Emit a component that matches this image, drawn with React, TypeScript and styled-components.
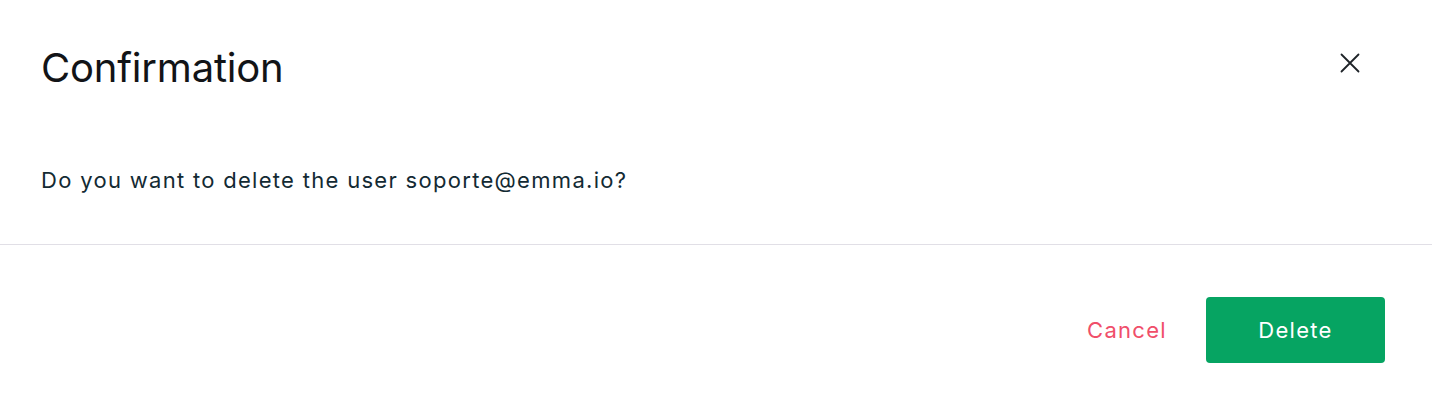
import React from "react";
import styled, { createGlobalStyle } from "styled-components";

const Global = createGlobalStyle`
  html, body { margin: 0; padding: 0; background: #ffffff; }
  body { font-family: Inter, "Noto Sans", sans-serif; }
`;

const Dialog = styled.div`
  width: 1432px;
  height: 412px;
  background: #fff;
  display: flex;
  flex-direction: column;
`;

const Header = styled.div`
  display: flex;
  align-items: flex-start;
  justify-content: space-between;
  padding: 44px 70px 0 41px;
  height: 48px;
`;

const Title = styled.h2`
  margin: 0;
  font-size: 40px;
  line-height: 48px;
  font-weight: 400;
  color: #121417;
  letter-spacing: -0.2px;
`;

const CloseButton = styled.button`
  border: 0;
  background: transparent;
  padding: 0;
  margin-top: 7px;
  width: 24px;
  height: 24px;
  display: flex;
  align-items: center;
  justify-content: center;
  cursor: pointer;
  color: #1e2328;
`;

const Body = styled.div`
  padding: 76px 41px 52px;
`;

const Message = styled.p`
  margin: 0;
  font-size: 22px;
  line-height: 24px;
  letter-spacing: 1.3px;
  color: #132a33;
`;

const Divider = styled.hr`
  margin: 0;
  border: 0;
  border-top: 1px solid #e1dfe6;
`;

const Footer = styled.div`
  display: flex;
  justify-content: flex-end;
  align-items: center;
  gap: 40px;
  padding: 52px 47px 0 0;
`;

const TextButton = styled.button`
  border: 0;
  background: transparent;
  font-family: inherit;
  font-size: 22px;
  letter-spacing: 1.3px;
  color: #f04e6a;
  padding: 0;
  margin-right: -1px;
  cursor: pointer;
`;

const PrimaryButton = styled.button`
  border: 0;
  background: #06a462;
  color: #fff;
  font-family: inherit;
  font-size: 22px;
  letter-spacing: 1.3px;
  width: 179px;
  height: 66px;
  border-radius: 4px;
  cursor: pointer;
`;

export default function App() {
  return (
    <>
      <Global />
      <Dialog>
        <Header>
          <Title>Confirmation</Title>
          <CloseButton aria-label="Close">
            <svg width="20" height="20" viewBox="0 0 20 20" fill="none">
              <path d="M1.5 1.5L18.5 18.5M18.5 1.5L1.5 18.5" stroke="currentColor" strokeWidth="1.8" strokeLinecap="round" />
            </svg>
          </CloseButton>
        </Header>
        <Body>
          <Message>Do you want to delete the user soporte@emma.io?</Message>
        </Body>
        <Divider />
        <Footer>
          <TextButton>Cancel</TextButton>
          <PrimaryButton>Delete</PrimaryButton>
        </Footer>
      </Dialog>
    </>
  );
}
